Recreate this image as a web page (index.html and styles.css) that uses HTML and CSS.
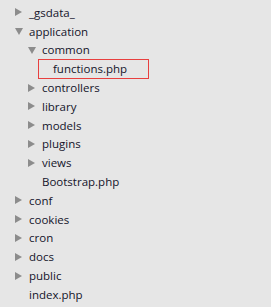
FILE: index.html
```html
<!DOCTYPE html>
<html lang="en">
<head>
  <meta charset="UTF-8" />
  <title>File tree</title>
  <link rel="stylesheet" href="styles.css">
</head>
<body>
  <ul class="tree">
    <li><div class="row"><span class="arrow closed"></span>_gsdata_</div></li>
    <li>
      <div class="row"><span class="arrow open"></span>application</div>
      <ul>
        <li>
          <div class="row"><span class="arrow open"></span>common</div>
          <ul>
            <li><div class="row file selected">functions.php</div></li>
          </ul>
        </li>
        <li><div class="row"><span class="arrow closed"></span>controllers</div></li>
        <li><div class="row"><span class="arrow closed"></span>library</div></li>
        <li><div class="row"><span class="arrow closed"></span>models</div></li>
        <li><div class="row"><span class="arrow closed"></span>plugins</div></li>
        <li><div class="row"><span class="arrow closed"></span>views</div></li>
        <li><div class="row file">Bootstrap.php</div></li>
      </ul>
    </li>
    <li><div class="row"><span class="arrow closed"></span>conf</div></li>
    <li><div class="row"><span class="arrow closed"></span>cookies</div></li>
    <li><div class="row"><span class="arrow closed"></span>cron</div></li>
    <li><div class="row"><span class="arrow closed"></span>docs</div></li>
    <li><div class="row"><span class="arrow closed"></span>public</div></li>
    <li><div class="row file">index.php</div></li>
  </ul>
</body>
</html>
```

FILE: styles.css
```css
* {
  margin: 0;
  padding: 0;
  box-sizing: border-box;
}

body {
  background: #e6e6e6;
  color: #14142a;
  font-family: 'Open Sans', sans-serif;
  font-size: 11.5px;
}

.tree {
  list-style: none;
  padding: 3px 0 0 15px;
}

.tree ul {
  list-style: none;
  padding-left: 13px;
}

.row {
  display: flex;
  align-items: center;
  height: 18.8px;
  white-space: nowrap;
}

.row.file {
  padding-left: 14px;
}

.row.selected {
  margin: -0.6px 0 -0.6px -3px;
  padding-left: 14px;
  width: 111px;
  height: 20px;
  border: 1px solid #e8403f;
}

.arrow {
  width: 14px;
  height: 8px;
  flex-shrink: 0;
  position: relative;
}

.arrow::before {
  content: "";
  position: absolute;
  left: 0;
  top: 0;
  width: 0;
  height: 0;
}

.arrow.closed::before {
  border-top: 4px solid transparent;
  border-bottom: 4px solid transparent;
  border-left: 7px solid #8c8c8c;
}

.arrow.open::before {
  top: 1px;
  border-left: 4px solid transparent;
  border-right: 4px solid transparent;
  border-top: 7px solid #8c8c8c;
}
```
